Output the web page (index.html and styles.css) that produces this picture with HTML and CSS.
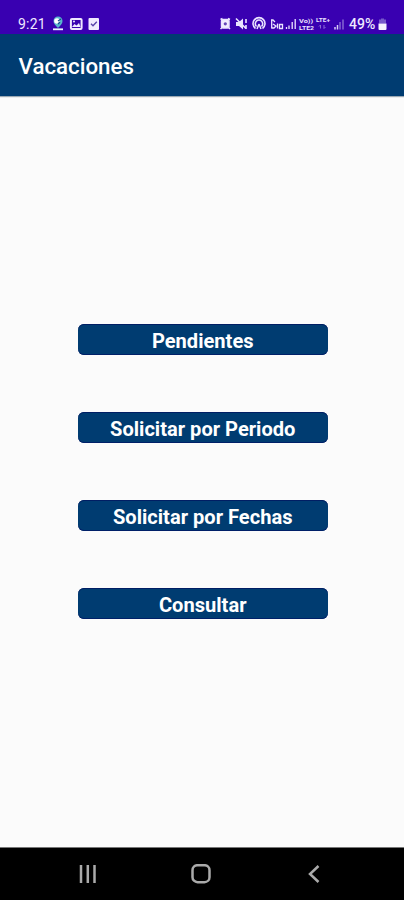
FILE: index.html
```html
<!DOCTYPE html>
<html lang="es">
<head>
<meta charset="utf-8">
<title>Vacaciones</title>
<link rel="stylesheet" href="styles.css">
</head>
<body>
<div class="status">
  <span class="time">9:21</span>
  <svg class="notifications" width="48" height="16" viewBox="0 0 48 16">
    <path d="M6 12C3 9 1.500 7.500 1.500 5a4.500 4.500 0 0 1 9 0C10.500 7.500 9 9 6 12z" fill="#58b5cd"/>
    <circle cx="5" cy="5" r="2.800" fill="#fff"/><path d="M6 5l3-2M6 8l2-2" stroke="#174c91" stroke-width="1.300"/>
    <path d="M1 13.300h10" stroke="#e8f5ff" stroke-width="1.800"/>
    <rect x="18.900" y="2.900" width="10.700" height="10.200" rx="1" fill="none" stroke="#eee8ff" stroke-width="2"/>
    <path d="M20 11l2.500-3 2 1.500L27 7l1.500 4z" fill="#eee8ff"/><circle cx="22" cy="5.500" r="1" fill="#eee8ff"/>
    <rect x="36.500" y="2" width="10.500" height="12" rx="1" fill="#f0eaff"/>
    <path d="M39 7.800l2 2 3.800-4" fill="none" stroke="#5640aa" stroke-width="1.400"/>
  </svg>
  <div class="system">
    <svg width="126" height="16" viewBox="0 0 126 16">
      <g fill="none" stroke="#eae3ff">
        <rect x="2.500" y="3.500" width="7.500" height="8.500" rx="1.500" fill="#f2edff" stroke-width="1.500"/>
        <path d="M1.500 3.500l2-1M11 3.500l-2-1M1.500 13l2-2M11 13l-2-2" stroke-width="1.500"/>
        <circle cx="6.300" cy="7.800" r="1.600" fill="#6547b8" stroke="none"/>
        <path d="M17 6h3l4-3.500v11L20 10h-3z" fill="#eae3ff" stroke="none"/>
        <path d="M17 2.500l10 10M27 3v4M27 9v4" stroke-width="1.600"/>
        <path d="M36.500 12.500a6 6 0 1 1 7 0M37.500 10.500a3.700 3.700 0 1 1 5 0" stroke-width="1.600"/>
        <path d="M40 8l-2 5M40 8l2 5" stroke-width="1.500"/>
        <path d="M52.700 4v8.500M52 4h2l2 2M52.500 12h2.500l2-2-3-2M58.500 7.500v5M60.500 8.500h3v4h-3z" stroke-width="1.300"/>
        <path d="M67.500 11v2M70 9.500V13M73.200 6v7M76.200 3v10" stroke-width="1.300"/>
      </g>
      <g fill="#eae3ff" font-family="Roboto, sans-serif" font-weight="700" font-size="5.500">
        <text x="80" y="7" textLength="14" lengthAdjust="spacingAndGlyphs">Vo))</text>
        <text x="80" y="13.800" textLength="15" lengthAdjust="spacingAndGlyphs">LTE2</text>
        <text x="97" y="6" textLength="14" lengthAdjust="spacingAndGlyphs">LTE+</text>
      </g>
      <path d="M101.500 12.500V9L100 10.500M105 9v3.500l1.500-1.500" fill="none" stroke="#8c6bd8"/>
      <path d="M116 11v2.500M118.500 9v4.500" stroke="#d8ccf7" stroke-width="1.500"/>
      <path d="M121 6v7.500M124 3.500v10" stroke="#8465d2" stroke-width="1.500"/>
    </svg>
    <span class="percent">49%</span>
    <svg width="9" height="14" viewBox="0 0 9 14">
      <path d="M3 1.500h3v1h2v4H1v-4h2z" fill="#7658ca"/>
      <path d="M.5 6.500h8V12a1 1 0 0 1-1 1h-6a1 1 0 0 1-1-1z" fill="#f5f1ff"/>
    </svg>
  </div>
</div>
<header class="appbar"><h1>Vacaciones</h1></header>
<main class="menu">
  <button>Pendientes</button>
  <button>Solicitar por Periodo</button>
  <button>Solicitar por Fechas</button>
  <button>Consultar</button>
</main>
<nav class="navbar">
  <svg width="18" height="20" viewBox="0 0 18 20"><path d="M2 1v18M8.800 1v18M15.500 1v18" stroke="#aaa" stroke-width="2.500"/></svg>
  <svg class="home" width="20" height="20" viewBox="0 0 20 20"><rect x="1.500" y="1.200" width="17" height="17" rx="5" fill="none" stroke="#aaa" stroke-width="2.500"/></svg>
  <svg width="12" height="20" viewBox="0 0 12 20"><path d="M10.500 2l-8.500 8 8.500 8" fill="none" stroke="#aaa" stroke-width="2.500"/></svg>
</nav>
</body>
</html>
```
FILE: styles.css
```css
* { box-sizing: border-box; }
body {
  margin: 0;
  height: 900px;
  display: flex;
  flex-direction: column;
  background: #fbfbfb;
  font-family: Roboto, sans-serif;
  overflow: hidden;
}
.status {
  flex: none;
  height: 34px;
  padding: 14px 17px 0 18px;
  display: flex;
  align-items: center;
  background: #3900b1;
  color: #eee8ff;
}
.time { width: 34px; font-size: 14px; letter-spacing: 0.2px; }
.system { margin-left: auto; display: flex; align-items: center; }
.percent { width: 29px; margin-left: 4px; font-size: 14px; font-weight: 500; }
.appbar {
  flex: none;
  height: 62px;
  padding: 1px 18px 0 18.500px;
  display: flex;
  align-items: center;
  background: #003c71;
  box-shadow: 0 1px 1px #9aa8b3;
}
h1 { margin: 0; color: #fff; font-size: 22.300px; font-weight: 500; }
.menu {
  flex: 1;
  padding-left: 78px;
  padding-top: 227.500px;
  display: flex;
  flex-direction: column;
  gap: 56.500px;
}
button {
  width: 249.500px;
  height: 31.500px;
  padding: 3px 0 0;
  border: 0;
  border-radius: 6px;
  background: #003c71;
  box-shadow: inset 0 1px #001e64, inset 0 -1px #002068;
  color: #fff;
  font: 700 20.100px Roboto, sans-serif;
}
.navbar {
  flex: none;
  height: 53px;
  padding: 0 84px 0 79px;
  display: flex;
  align-items: center;
  justify-content: space-between;
  background: #000;
  border-top: 1px solid #777;
}
.home { margin-right: 4px; }
```
